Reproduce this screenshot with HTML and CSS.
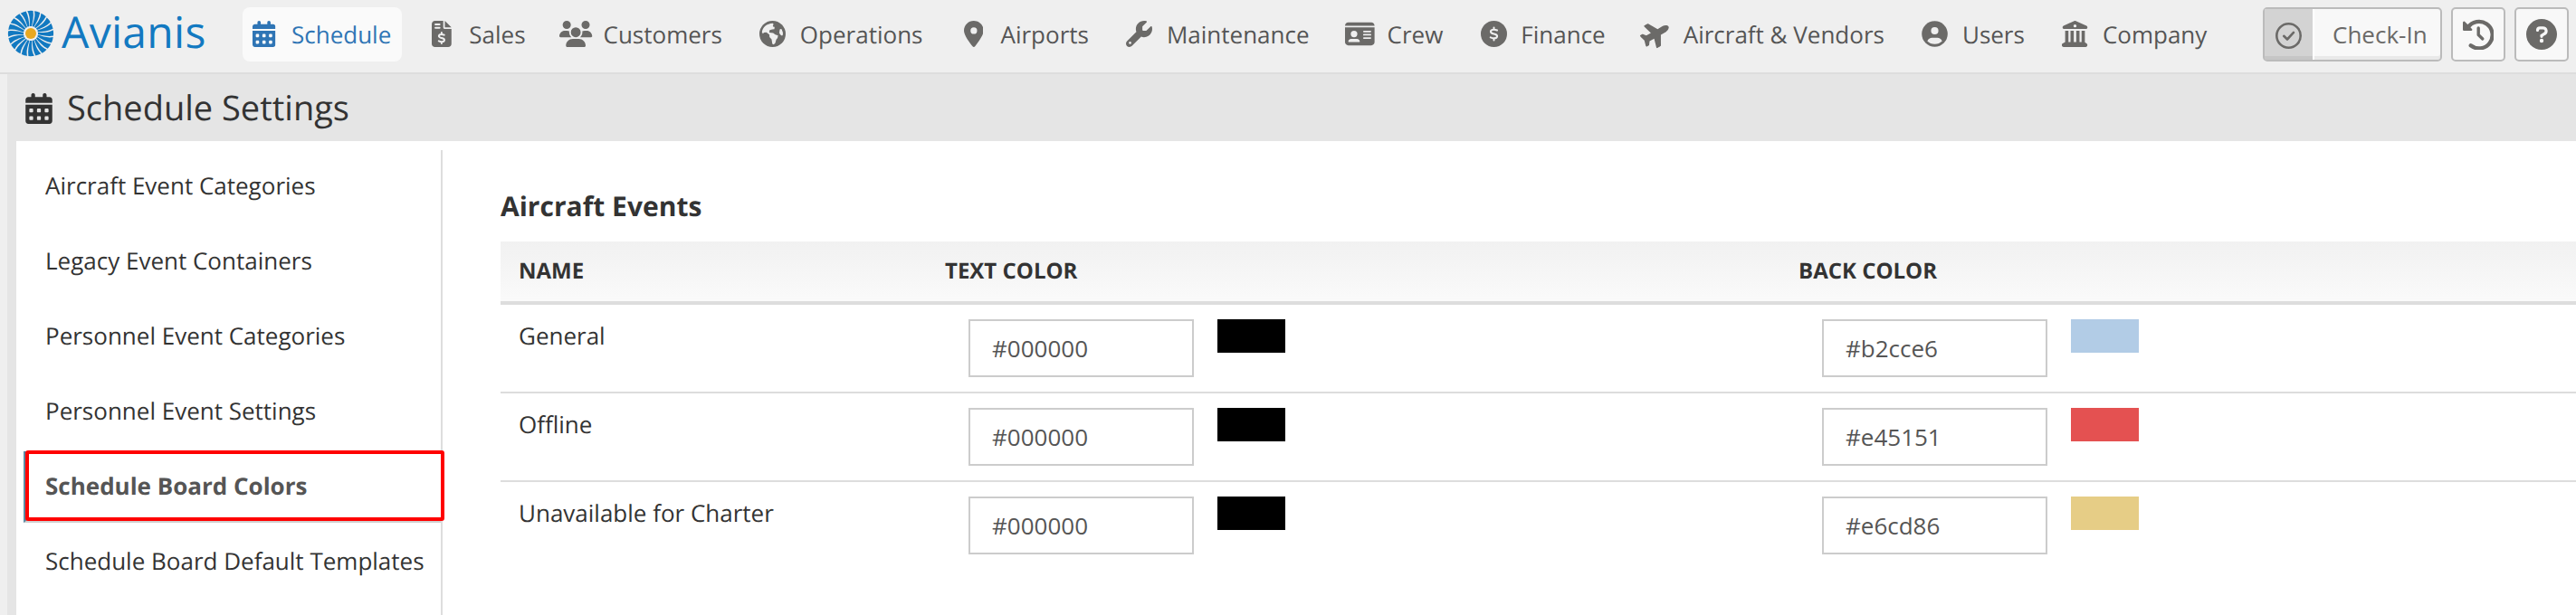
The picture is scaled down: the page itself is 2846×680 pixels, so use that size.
FILE: index.html
```html
<!DOCTYPE html>
<html lang="en">
<head>
    <meta charset="UTF-8">
    <meta name="viewport" content="width=device-width, initial-scale=1.0">
    <title>Schedule Settings</title>
    <link rel="stylesheet" href="styles.css">
</head>
<body>

    <!-- Shared icon shapes -->
    <svg class="sprite" width="0" height="0">
        <symbol id="calendar" viewBox="0 0 448 512">
            <path d="M128 0c17.700 0 32 14.300 32 32V64H288V32c0-17.700 14.300-32 32-32s32 14.300 32 32V64h48c26.500 0 48 21.500 48 48v48H0V112C0 85.500 21.500 64 48 64H96V32c0-17.700 14.300-32 32-32zM0 192H448V464c0 26.500-21.500 48-48 48H48c-26.500 0-48-21.500-48-48V192zm64 80v32c0 8.800 7.200 16 16 16h32c8.800 0 16-7.200 16-16V272c0-8.800-7.200-16-16-16H80c-8.800 0-16 7.200-16 16zm128 0v32c0 8.800 7.200 16 16 16h32c8.800 0 16-7.200 16-16V272c0-8.800-7.200-16-16-16H208c-8.800 0-16 7.200-16 16zm144-16c-8.800 0-16 7.200-16 16v32c0 8.800 7.200 16 16 16h32c8.800 0 16-7.200 16-16V272c0-8.800-7.200-16-16-16H336zM64 400v32c0 8.800 7.200 16 16 16h32c8.800 0 16-7.200 16-16V400c0-8.800-7.200-16-16-16H80c-8.800 0-16 7.200-16 16zm144-16c-8.800 0-16 7.200-16 16v32c0 8.800 7.200 16 16 16h32c8.800 0 16-7.200 16-16V400c0-8.800-7.200-16-16-16H208zm112 16v32c0 8.800 7.200 16 16 16h32c8.800 0 16-7.200 16-16V400c0-8.800-7.200-16-16-16H336c-8.800 0-16 7.200-16 16z"/>
        </symbol>
        <path id="petal" d="M-1 -8C-1.200 -14 -0.600 -19 -3.800 -24.700Q-1 -25.400 2.600 -25C3.500 -19 2.200 -13 1 -8Z"/>
    </svg>

    <header class="topbar">
        <a class="brand">
            <svg class="logo" viewBox="-26 -26 52 52">
                <g fill="#1279c1">
                    <use href="#petal"/>
                    <use href="#petal" transform="rotate(18)"/>
                    <use href="#petal" transform="rotate(36)"/>
                    <use href="#petal" transform="rotate(54)"/>
                    <use href="#petal" transform="rotate(72)"/>
                    <use href="#petal" transform="rotate(90)"/>
                    <use href="#petal" transform="rotate(108)"/>
                    <use href="#petal" transform="rotate(126)"/>
                    <use href="#petal" transform="rotate(144)"/>
                    <use href="#petal" transform="rotate(162)"/>
                    <use href="#petal" transform="rotate(180)"/>
                    <use href="#petal" transform="rotate(198)"/>
                    <use href="#petal" transform="rotate(216)"/>
                    <use href="#petal" transform="rotate(234)"/>
                    <use href="#petal" transform="rotate(252)"/>
                    <use href="#petal" transform="rotate(270)"/>
                    <use href="#petal" transform="rotate(288)"/>
                    <use href="#petal" transform="rotate(306)"/>
                    <use href="#petal" transform="rotate(324)"/>
                    <use href="#petal" transform="rotate(342)"/>
                </g>
                <circle r="6" fill="#e9a820"/>
            </svg>
            <span class="brand-name">Avianis</span>
        </a>

        <nav class="menu">
            <a class="menu-item active">
                <span class="menu-icon"><svg viewBox="0 0 448 512"><use href="#calendar"/></svg></span>
                Schedule
            </a>
            <a class="menu-item">
                <span class="menu-icon">
                    <svg viewBox="0 0 384 512">
                        <path d="M64 0H224V128c0 17.700 14.300 32 32 32H384V448c0 35.300-28.700 64-64 64H64c-35.300 0-64-28.700-64-64V64C0 28.700 28.700 0 64 0zM256 0V128H384z"/>
                        <path class="cut" d="M72 72h80M72 136h80M192 232v28M192 414v26M242 276c-20-10-36-13-52-13-62 0-66 52-14 68l32 9c55 16 50 71-16 71-20 0-38-7-54-15"/>
                    </svg>
                </span>
                Sales
            </a>
            <a class="menu-item">
                <span class="menu-icon">
                    <svg viewBox="0 0 640 512">
                        <path d="M144 0a80 80 0 1 1 0 160A80 80 0 1 1 144 0zM512 0a80 80 0 1 1 0 160A80 80 0 1 1 512 0zM0 298.700C0 239.800 47.800 192 106.700 192h42.700c15.900 0 31 3.500 44.600 9.700c-1.300 7.200-1.900 14.700-1.900 22.300c0 38.200 16.800 72.500 43.300 96H21.300C9.600 320 0 310.400 0 298.700zM405.300 320c26.600-23.500 43.300-57.800 43.300-96c0-7.600-.7-15-1.900-22.300c13.600-6.300 28.700-9.700 44.600-9.700h42.700C592.200 192 640 239.800 640 298.700c0 11.800-9.600 21.300-21.300 21.300H405.300zM224 224a96 96 0 1 1 192 0 96 96 0 1 1-192 0zM128 485.300C128 411.700 187.700 352 261.300 352H378.700C452.300 352 512 411.700 512 485.300c0 14.700-11.900 26.700-26.700 26.700H154.700c-14.700 0-26.700-11.900-26.700-26.700z"/>
                    </svg>
                </span>
                Customers
            </a>
            <a class="menu-item">
                <span class="menu-icon">
                    <svg viewBox="0 0 512 512">
                        <circle cx="256" cy="256" r="256"/>
                        <path class="land" d="M50 226C58 130 140 56 262 50l14 14-14 34 12 22h22l-4 42-42 6-50 12-8 50 76 10 42 30 54 16-10 50-26 32-18 66-30 30-28-12-14-92-40-42-4-48-58-44-46 4-22 20z"/>
                        <path class="land" d="M398 168c12-14 28-14 38-2l20 58c6 34 2 56-14 66-26-6-46-26-54-54z"/>
                    </svg>
                </span>
                Operations
            </a>
            <a class="menu-item">
                <span class="menu-icon">
                    <svg viewBox="0 0 384 512">
                        <path fill-rule="evenodd" d="M215.700 499.200C267 435 384 279.400 384 192C384 86 298 0 192 0S0 86 0 192c0 87.400 117 243 168.300 307.200c12.300 15.300 35.100 15.300 47.400 0zM192 128a64 64 0 1 0 0 128 64 64 0 1 0 0-128z"/>
                    </svg>
                </span>
                Airports
            </a>
            <a class="menu-item">
                <span class="menu-icon">
                    <svg viewBox="0 0 512 512">
                        <path fill-rule="evenodd" d="M352 320c88.400 0 160-71.600 160-160c0-15.300-2.200-30.100-6.200-44.200c-3.100-10.800-16.400-13.200-24.300-5.300l-76.800 76.800c-3 3-7.100 4.700-11.300 4.700H336c-8.800 0-16-7.200-16-16V118.600c0-4.200 1.700-8.300 4.700-11.300l76.800-76.800c7.900-7.900 5.400-21.200-5.300-24.300C382.100 2.200 367.300 0 352 0C263.600 0 192 71.600 192 160c0 19.100 3.400 37.500 9.500 54.500L19.900 396.100C7.200 408.800 0 426.100 0 444.100C0 481.600 30.400 512 67.900 512c18 0 35.300-7.200 48-19.900L297.500 310.500c17 6.200 35.400 9.500 54.500 9.500zM80 408a24 24 0 1 1 0 48 24 24 0 1 1 0-48z"/>
                    </svg>
                </span>
                Maintenance
            </a>
            <a class="menu-item">
                <span class="menu-icon">
                    <svg viewBox="0 0 576 512">
                        <path fill-rule="evenodd" d="M0 96l576 0c0-35.300-28.700-64-64-64H64C28.700 32 0 60.700 0 96zm0 32V416c0 35.300 28.700 64 64 64H512c35.300 0 64-28.700 64-64V128H0zM64 405.300c0-29.500 23.900-53.300 53.300-53.300H234.700c29.500 0 53.300 23.900 53.300 53.300c0 5.900-4.800 10.700-10.700 10.700H74.700c-5.900 0-10.700-4.800-10.700-10.700zM176 192a64 64 0 1 1 0 128 64 64 0 1 1 0-128zm176 16c0-8.800 7.200-16 16-16H496c8.800 0 16 7.200 16 16s-7.200 16-16 16H368c-8.800 0-16-7.200-16-16zm0 64c0-8.800 7.200-16 16-16H496c8.800 0 16 7.200 16 16s-7.200 16-16 16H368c-8.800 0-16-7.200-16-16zm0 64c0-8.800 7.200-16 16-16H496c8.800 0 16 7.200 16 16s-7.200 16-16 16H368c-8.800 0-16-7.200-16-16z"/>
                    </svg>
                </span>
                Crew
            </a>
            <a class="menu-item">
                <span class="menu-icon">
                    <svg viewBox="0 0 512 512">
                        <circle cx="256" cy="256" r="256"/>
                        <path class="cut" d="M256 132v36M256 344v36M318 186c-22-11-42-15-62-15-78 0-82 62-16 79l34 9c66 17 60 83-18 83-24 0-46-8-66-17"/>
                    </svg>
                </span>
                Finance
            </a>
            <a class="menu-item">
                <span class="menu-icon">
                    <svg class="plane" viewBox="0 0 576 512">
                        <path d="M482.300 192c34.200 0 93.700 29 93.700 64c0 36-59.500 64-93.700 64l-116.600 0L265.200 495.900c-5.700 10-16.300 16.100-27.800 16.100l-56.200 0c-10.600 0-18.300-10.200-15.400-20.400l49-171.600L112 320 68.800 377.600c-3 4-7.800 6.400-12.800 6.400l-42 0c-7.800 0-14-6.300-14-14c0-1.300 .2-2.600 .5-3.900L32 256 .5 145.900c-.4-1.300-.5-2.600-.5-3.900c0-7.800 6.300-14 14-14l42 0c5 0 9.800 2.400 12.800 6.400L112 192l102.900 0-49-171.600C162.900 10.200 170.600 0 181.200 0l56.200 0c11.500 0 22.100 6.200 27.800 16.100L365.700 192l116.600 0z"/>
                    </svg>
                </span>
                Aircraft &amp; Vendors
            </a>
            <a class="menu-item">
                <span class="menu-icon">
                    <svg viewBox="0 0 512 512">
                        <circle cx="256" cy="256" r="252"/>
                        <circle class="land" cx="256" cy="195" r="72"/>
                        <path class="land" d="M112 398c18-44 52-66 92-66h104c40 0 74 22 92 66-36 36-86 58-144 58s-108-22-144-58z"/>
                    </svg>
                </span>
                Users
            </a>
            <a class="menu-item">
                <span class="menu-icon">
                    <svg viewBox="0 0 512 512">
                        <path fill-rule="evenodd" d="M240 4c10-5 22-5 32 0l208 94c32 16 22 62-14 62H46c-36 0-46-46-14-62zM256 70a30 30 0 1 0 0 60 30 30 0 1 0 0-60zM64 192h64v224h40V192h64v224h48V192h64v224h40V192h64v228l38 26c24 18 10 66-22 66H32c-32 0-46-48-22-66l54-30z"/>
                    </svg>
                </span>
                Company
            </a>
        </nav>

        <div class="actions">
            <button class="checkin">
                <span class="checkin-icon">
                    <svg viewBox="0 0 29 29" fill="none" stroke="#6b6a68" stroke-linecap="round" stroke-linejoin="round">
                        <circle cx="14.500" cy="14.500" r="13.200" stroke-width="2.600"/>
                        <path d="M9.200 14.800l3.800 3.700 7-7.600" stroke-width="2.600"/>
                    </svg>
                </span>
                <span class="checkin-text">Check-In</span>
            </button>
            <button class="square">
                <svg viewBox="0 0 34 34" fill="none" stroke="#6b6a68" stroke-linecap="round" stroke-linejoin="round">
                    <path d="M5.500 9.500A14.800 14.800 0 1 1 8.700 29.300" stroke-width="4.300"/>
                    <path d="M17.200 10v7.500l4.600 4.400" stroke-width="3.400"/>
                    <path d="M1.300 4v7.800h7.800z" fill="#6b6a68" stroke-width="2.600"/>
                </svg>
            </button>
            <button class="square">
                <svg viewBox="0 0 34 34" fill="none">
                    <circle cx="17" cy="17" r="17" fill="#6b6a68"/>
                    <path d="M12.500 12.500c0-2 1.300-2.700 2.800-2.700h3c4.300 0 5 5 1.700 6.700L17 18.300v1" stroke="#f8f8f8" stroke-width="3.200" stroke-linecap="round"/>
                    <circle cx="17" cy="24" r="2.200" fill="#f8f8f8"/>
                </svg>
            </button>
        </div>
    </header>

    <main class="page">
        <h1 class="page-title">
            <svg viewBox="0 0 448 512"><use href="#calendar"/></svg>
            Schedule Settings
        </h1>

        <div class="panel">
            <ul class="sidebar">
                <li>Aircraft Event Categories</li>
                <li>Legacy Event Containers</li>
                <li>Personnel Event Categories</li>
                <li>Personnel Event Settings</li>
                <li class="selected">Schedule Board Colors<span class="highlight"></span></li>
                <li>Schedule Board Default Templates</li>
            </ul>

            <section class="content">
                <h2>Aircraft Events</h2>
                <div class="table">
                    <div class="row head">
                        <div>NAME</div>
                        <div>TEXT COLOR</div>
                        <div>BACK COLOR</div>
                    </div>
                    <div class="row">
                        <div class="name">General</div>
                        <div class="color"><input type="text" value="#000000"><span class="swatch black"></span></div>
                        <div class="color"><input type="text" value="#b2cce6"><span class="swatch blue"></span></div>
                    </div>
                    <div class="row">
                        <div class="name">Offline</div>
                        <div class="color"><input type="text" value="#000000"><span class="swatch black"></span></div>
                        <div class="color"><input type="text" value="#e45151"><span class="swatch red"></span></div>
                    </div>
                    <div class="row">
                        <div class="name">Unavailable for Charter</div>
                        <div class="color"><input type="text" value="#000000"><span class="swatch black"></span></div>
                        <div class="color"><input type="text" value="#e6cd86"><span class="swatch yellow"></span></div>
                    </div>
                </div>
            </section>
        </div>
    </main>

</body>
</html>
```
FILE: styles.css
```css
* {
    margin: 0;
    padding: 0;
    box-sizing: border-box;
}
body {
    font-family: "Open Sans", "Noto Sans", sans-serif;
    font-size: 26px;
    text-rendering: geometricPrecision;
    color: #333;
    background-color: #efefef;
    height: 680px;
    overflow: hidden;
}
svg {
    display: block;
    flex-shrink: 0;
}
.sprite {
    position: absolute;
}

/* Top bar */
.topbar {
    display: flex;
    align-items: flex-start;
    height: 82px;
    padding: 8px 8px 0;
    border-bottom: 2px solid #ddd;
    white-space: nowrap;
}
.brand {
    display: flex;
    width: 260px;
    height: 60px;
}
.logo {
    width: 52px;
    height: 52px;
    margin-top: 3px;
}
.brand-name {
    margin-left: 8px;
    font-size: 48px;
    letter-spacing: 0.3px;
    line-height: 55px;
    color: #1279c1;
}
.menu {
    display: flex;
    gap: 20px;
}
.menu-item {
    display: flex;
    align-items: center;
    gap: 12px;
    height: 60px;
    padding: 0 12px 1px 6px;
    border-radius: 8px;
    color: #555;
}
.menu-item.active {
    background-color: #fafafa;
    color: #2f75b5;
}
.menu-icon {
    display: flex;
    justify-content: center;
    width: 36px;
}
.menu-icon svg {
    height: 29px;
    fill: #6b6a68;
}
.active .menu-icon svg {
    fill: #2f75b5;
}
.menu-icon .land {
    fill: #efefef;
}
.menu-icon .cut {
    fill: none;
    stroke: #efefef;
    stroke-width: 36;
    stroke-linecap: round;
}
.menu-icon .plane {
    transform: rotate(-30deg);
}

.actions {
    display: flex;
    gap: 10px;
    margin-left: auto;
}
button {
    height: 60px;
    border: 2px solid #bbb;
    border-radius: 5px;
    background-color: #f8f8f8;
    font: inherit;
    color: #6b6a68;
}
.checkin {
    display: flex;
    width: 198px;
    box-shadow: inset 0 -4px 0 rgba(0, 0, 0, 0.06);
}
.checkin-icon {
    width: 55px;
    height: 56px;
    padding: 15px 0 0 12px;
    border-right: 2px solid #fff;
    background-color: #d3d3d3;
    box-shadow: inset 0 -4px 0 rgba(0, 0, 0, 0.06);
}
.checkin-icon svg {
    width: 29px;
    height: 29px;
}
.checkin-text {
    margin-left: 20px;
    line-height: 56px;
}
.square {
    display: flex;
    align-items: center;
    justify-content: center;
    width: 60px;
}
.square svg {
    width: 34px;
    height: 34px;
}

/* Page */
.page {
    height: 598px;
    margin-left: 8px;
    padding-left: 10px;
    background-color: #e5e5e5;
}
.page-title {
    display: flex;
    align-items: center;
    gap: 16px;
    height: 74px;
    padding-left: 10px;
    font-size: 38px;
    font-weight: normal;
}
.page-title svg {
    width: 30px;
    height: 34px;
    margin-top: 2px;
    fill: #333;
}
.panel {
    display: flex;
    height: 524px;
    padding-top: 10px;
    background-color: #fff;
}
.sidebar {
    width: 471px;
    padding: 1px 0 0 8px;
    border-right: 2px solid #ddd;
    list-style: none;
    white-space: nowrap;
}
.sidebar li {
    height: 79px;
    margin-bottom: 4px;
    padding-left: 20px;
    border-left: 4px solid transparent;
    line-height: 77px;
}
.sidebar .selected {
    position: relative;
    border-left-color: #5b8ba5;
    border-bottom: 3px solid #d0d0d0;
    font-weight: bold;
    color: #555;
}
.highlight {
    position: absolute;
    top: -1px;
    left: -2px;
    width: 463px;
    height: 78px;
    border: 4px solid #f00;
    border-radius: 3px;
}

/* Color table */
.content {
    flex: 1;
    padding: 42px 0 0 64px;
}
.content h2 {
    height: 59px;
    font-size: 30px;
    line-height: 40px;
}
.row {
    display: grid;
    grid-template-columns: 471px 943px 1fr;
    height: 98px;
    padding-left: 20px;
    border-bottom: 2px solid #ddd;
}
.row:last-child {
    border-bottom: none;
}
.row.head {
    height: 70px;
    border-bottom: 4px solid #ddd;
    background: linear-gradient(#f1f1f1, #fafafa);
    font-size: 24px;
    font-weight: bold;
    line-height: 66px;
}
.name {
    padding-top: 16px;
}
.color {
    display: flex;
    align-items: flex-start;
    gap: 26px;
    padding: 16px 0 0 26px;
}
input {
    width: 249px;
    height: 64px;
    padding: 0 24px;
    border: 2px solid #ccc;
    font: inherit;
    color: #555;
}
.swatch {
    width: 75px;
    height: 37px;
}
.black {
    background-color: #000;
}
.blue {
    background-color: #b2cce6;
}
.red {
    background-color: #e45151;
}
.yellow {
    background-color: #e6cd86;
}
```
